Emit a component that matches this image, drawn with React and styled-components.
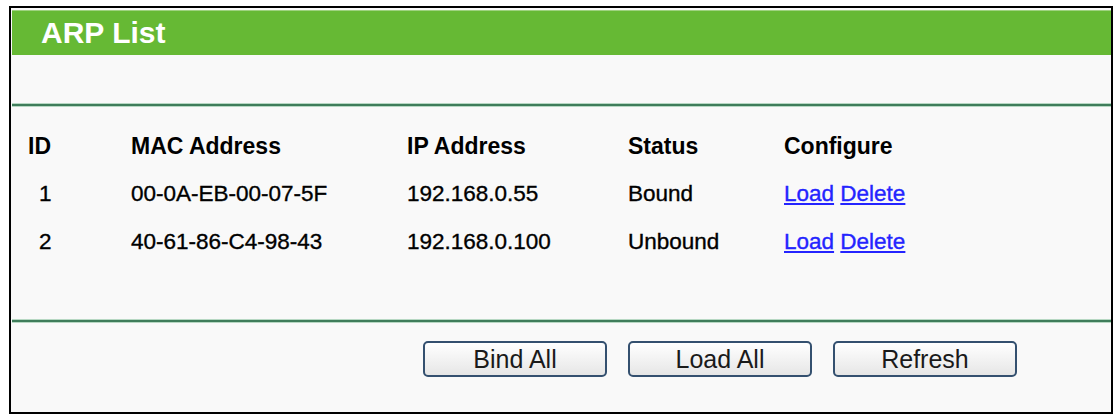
import React from 'react'
import styled, { createGlobalStyle } from 'styled-components'

const GlobalStyle = createGlobalStyle`
  html, body {
    margin: 0;
    padding: 0;
    background: #ffffff;
    font-family: "Liberation Sans", Arial, sans-serif;
  }
`

const Frame = styled.div`
  margin: 6px 0 0 9px;
  width: 1104px;
  height: 408px;
  box-sizing: border-box;
  border: 2px solid #000;
  background: #f9f9f9;
  padding: 2px 0 0 1px;
`

const Header = styled.div`
  height: 45px;
  box-sizing: border-box;
  background: #66b934;
  border-top: 1px solid #9fd27f;
  color: #fff;
  font-weight: bold;
  font-size: 30px;
  line-height: 44px;
  padding-left: 29px;
`

const Spacer = styled.div`
  height: ${p => p.h}px;
`

const Divider = styled.div`
  height: 2px;
  background: #3f7d5b;
  box-shadow: 0 -1px 0 #b7d8c3, 0 1px 0 #b7d8c3;
`

const Table = styled.div`
  display: grid;
  grid-template-columns: 103px 276px 221px 156px 1fr;
  padding-left: 16px;
`

const Cell = styled.div`
  height: ${p => p.h}px;
  line-height: ${p => p.h}px;
  font-size: ${p => (p.head ? 23 : 22.5)}px;
  font-weight: ${p => (p.head ? 'bold' : 'normal')};
  -webkit-text-stroke: ${p => (p.head ? 0 : 0.35)}px currentColor;
  color: #000;
  white-space: nowrap;
  padding-left: ${p => p.indent || 0}px;
`

const Link = styled.a`
  color: #2424ff;
  text-decoration: underline;
  cursor: pointer;
`

const ButtonRow = styled.div`
  display: flex;
  gap: 21px;
  padding-left: 411px;
`

const Button = styled.button`
  width: 184px;
  height: 36px;
  border: 2px solid #34506f;
  border-radius: 5px;
  background: linear-gradient(#ffffff, #e6e6e6);
  font-family: "Liberation Sans", Arial, sans-serif;
  font-size: 25px;
  color: #1a1a1a;
  padding: 0;
  cursor: pointer;
`

const rows = [
  { id: 1, mac: '00-0A-EB-00-07-5F', ip: '192.168.0.55', status: 'Bound', h: 50 },
  { id: 2, mac: '40-61-86-C4-98-43', ip: '192.168.0.100', status: 'Unbound', h: 46 },
]

const App = () => {
  return (
    <>
      <GlobalStyle />
      <Frame>
        <Header>ARP List</Header>
        <Spacer h={49} />
        <Divider />
        <Spacer h={18} />
        <Table>
          <Cell head h={45}>ID</Cell>
          <Cell head h={45}>MAC Address</Cell>
          <Cell head h={45}>IP Address</Cell>
          <Cell head h={45}>Status</Cell>
          <Cell head h={45}>Configure</Cell>
          {rows.map(r => (
            <React.Fragment key={r.id}>
              <Cell h={r.h} indent={11}>{r.id}</Cell>
              <Cell h={r.h}>{r.mac}</Cell>
              <Cell h={r.h}>{r.ip}</Cell>
              <Cell h={r.h}>{r.status}</Cell>
              <Cell h={r.h}>
                <Link>Load</Link> <Link>Delete</Link>
              </Cell>
            </React.Fragment>
          ))}
        </Table>
        <Spacer h={55} />
        <Divider />
        <Spacer h={19} />
        <ButtonRow>
          <Button>Bind All</Button>
          <Button>Load All</Button>
          <Button>Refresh</Button>
        </ButtonRow>
      </Frame>
    </>
  )
}

export default App
